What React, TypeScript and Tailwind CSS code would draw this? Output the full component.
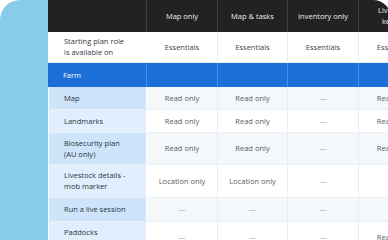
import React from 'react';

const cols = 'grid grid-cols-[99px_71px_70px_71px_71px]';

type Access = { label: string; values: string[]; height: string; dark: boolean };

const rows: Access[] = [
  { label: 'Map', values: ['Read only', 'Read only', '—', 'Read only'], height: 'h-[23px]', dark: true },
  { label: 'Landmarks', values: ['Read only', 'Read only', '—', 'Read only'], height: 'h-[23px]', dark: false },
  { label: 'Biosecurity plan\n(AU only)', values: ['Read only', 'Read only', '—', 'Read only'], height: 'h-[32px]', dark: true },
  { label: 'Livestock details -\nmob marker', values: ['Location only', 'Location only', '—', '—'], height: 'h-[33px]', dark: false },
  { label: 'Run a live session', values: ['—', '—', '—', '—'], height: 'h-[24px]', dark: true },
  { label: 'Paddocks\n\u00a0', values: ['—', '—', '—', 'Read only'], height: 'h-[32px]', dark: false },
];

function Cell({ children, className = '' }: { children?: React.ReactNode; className?: string }) {
  return (
    <div className={`flex items-center justify-center text-center border-r border-[#e6edf3] ${className}`}>
      {children}
    </div>
  );
}

export default function App() {
  return (
    <div
      className="w-[388px] h-[240px] overflow-hidden bg-white flex text-[7.5px] leading-[11px]"
      style={{ fontFamily: '"Open Sans", "Noto Sans", sans-serif' }}
    >
      {/* side panel */}
      <div className="w-[48px] shrink-0 bg-[#87cde9] rounded-tl-[20px]" />

      {/* table */}
      <div className="w-[343px] shrink-0 overflow-hidden rounded-tr-[18px]">
        <div className="w-[382px]">
          {/* header */}
          <div className={`${cols} h-[32px] bg-[#222222] text-[#ececec]`}>
            <div className="border-r border-[#3d3d3d]" />
            {['Map only', 'Map & tasks', 'Inventory only', 'Livestock keeper'].map((h) => (
              <div key={h} className="flex items-center justify-center text-center px-2 border-r border-[#3d3d3d]">
                {h}
              </div>
            ))}
          </div>

          {/* starting plan */}
          <div className={`${cols} h-[31px] border-b border-[#e6edf3] text-[#333b42]`}>
            <div className="flex items-center pl-[15px] border-l border-white border-r border-[#e6edf3]">
              <span>
                Starting plan role
                <br />
                is available on
              </span>
            </div>
            {[0, 1, 2, 3].map((i) => (
              <Cell key={i} className="text-[#3c4348]">Essentials</Cell>
            ))}
          </div>

          {/* section */}
          <div className={`${cols} h-[24px] bg-[#1b6fd7] text-white`}>
            <div className="flex items-center pl-[15px] border-r border-[#4b8fe4]">Farm</div>
            {[0, 1, 2, 3].map((i) => (
              <div key={i} className="border-r border-[#4b8fe4]" />
            ))}
          </div>

          {rows.map((r) => (
            <div
              key={r.label}
              className={`${cols} ${r.height} border-b border-[#eaf0f5] ${r.dark ? 'bg-[#f5f8fa]' : 'bg-white'}`}
            >
              <div
                className={`flex items-center pl-[15px] whitespace-pre-line text-[#2b3640] border-l border-white border-r border-[#e6edf3] ${
                  r.dark ? 'bg-[#cde4fb]' : 'bg-[#e1eefd]'
                }`}
              >
                {r.label}
              </div>
              {r.values.map((v, i) => (
                <Cell key={i} className={v === '—' ? 'text-[#a9adb1]' : 'text-[#575d62]'}>
                  {v}
                </Cell>
              ))}
            </div>
          ))}
        </div>
      </div>
    </div>
  );
}
